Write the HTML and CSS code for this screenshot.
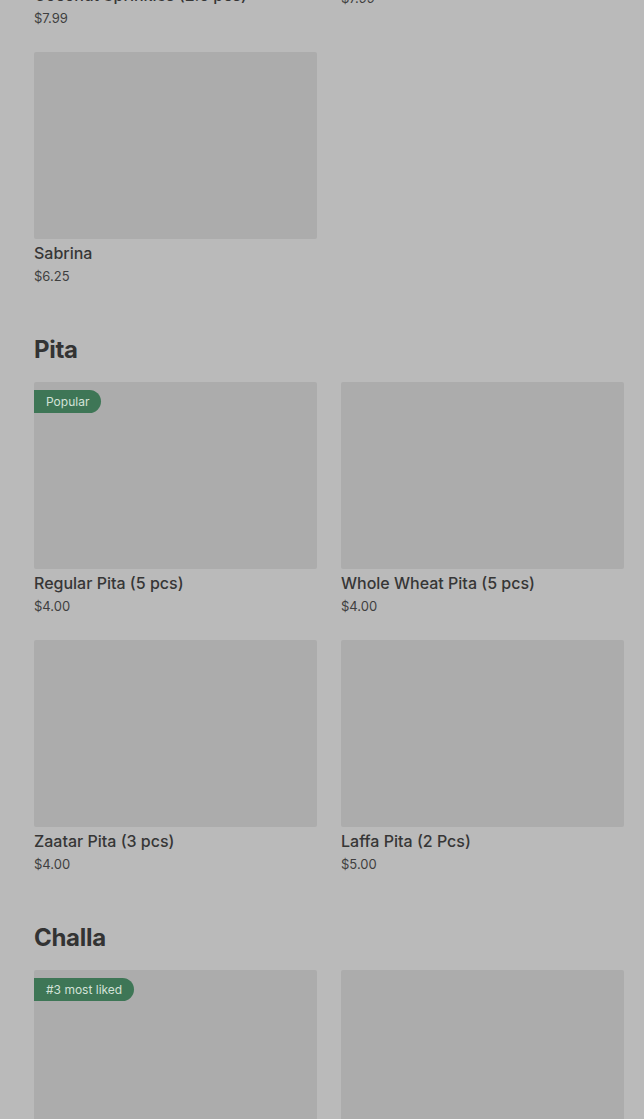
FILE: index.html
```html
<!DOCTYPE html>
<html>
<head>
<meta charset="utf-8">
<link rel="stylesheet" href="styles.css">
</head>
<body>
<main class="menu">
  <section class="section section-first">
    <div class="grid">
      <div class="card">
        <div class="thumb"></div>
        <div class="name">Chocolate Chip Rugelach with Coconut Sprinkles (2.5 pcs)</div>
        <div class="price">$7.99</div>
      </div>
      <div class="card">
        <div class="thumb"></div>
        <div class="name">Cinnamon Rugelach</div>
        <div class="price">$7.99</div>
      </div>
      <div class="card">
        <div class="thumb"></div>
        <div class="name">Sabrina</div>
        <div class="price">$6.25</div>
      </div>
    </div>
  </section>

  <section class="section">
    <h2 class="heading">Pita</h2>
    <div class="grid">
      <div class="card">
        <div class="thumb"><span class="badge">Popular</span></div>
        <div class="name">Regular Pita (5 pcs)</div>
        <div class="price">$4.00</div>
      </div>
      <div class="card">
        <div class="thumb"></div>
        <div class="name">Whole Wheat Pita (5 pcs)</div>
        <div class="price">$4.00</div>
      </div>
      <div class="card">
        <div class="thumb"></div>
        <div class="name">Zaatar Pita (3 pcs)</div>
        <div class="price">$4.00</div>
      </div>
      <div class="card">
        <div class="thumb"></div>
        <div class="name">Laffa Pita (2 Pcs)</div>
        <div class="price">$5.00</div>
      </div>
    </div>
  </section>

  <section class="section">
    <h2 class="heading">Challa</h2>
    <div class="grid">
      <div class="card">
        <div class="thumb"><span class="badge">#3 most liked</span></div>
        <div class="name">Challa</div>
        <div class="price">$8.00</div>
      </div>
      <div class="card">
        <div class="thumb"></div>
        <div class="name">Raisin Challa</div>
        <div class="price">$9.00</div>
      </div>
    </div>
  </section>
</main>
</body>
</html>
```

FILE: styles.css
```css
html, body {
  margin: 0;
  padding: 0;
  background: #bababa;
  overflow: hidden;
}

body {
  font-family: Inter, "Liberation Sans", sans-serif;
  color: #333333;
}

.menu {
  padding: 0 20px 0 34px;
}

.section-first {
  margin-top: -226px;
}

.section + .section {
  margin-top: 47px;
}

.heading {
  margin: 0 0 17px;
  padding-top: 1px;
  height: 31px;
  font-size: 24px;
  line-height: 32px;
  font-weight: 700;
  letter-spacing: -0.3px;
  color: #333333;
}

.grid {
  display: grid;
  grid-template-columns: 283px 283px;
  column-gap: 24px;
  row-gap: 24px;
  align-items: start;
}

.card {
  display: flex;
  flex-direction: column;
}

.thumb {
  position: relative;
  height: 187px;
  background: #acacac;
  border-radius: 2px;
}

.badge {
  position: absolute;
  left: 0;
  top: 8px;
  height: 23px;
  line-height: 23px;
  padding: 0 12px;
  background: #3e7656;
  color: #d3e2d8;
  font-size: 12px;
  font-weight: 400;
  border-radius: 0 12px 12px 0;
}

.name {
  margin-top: 4px;
  font-size: 16px;
  line-height: 20px;
  font-weight: 500;
  color: #363636;
}

.price {
  margin-top: 3px;
  font-size: 13px;
  line-height: 20px;
  color: #3f3f3f;
}
```
